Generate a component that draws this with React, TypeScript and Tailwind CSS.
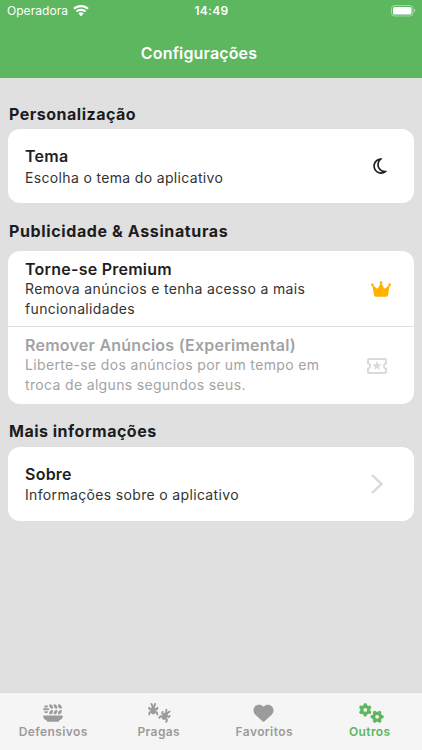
import React from 'react';
import {
  FaBugs,
  FaCrown,
  FaGears,
  FaHeart,
  FaPlateWheat,
  FaRegMoon
} from 'react-icons/fa6';
import { MdOutlineLocalActivity } from 'react-icons/md';

const StatusBar = () => (
  <div className="grid h-[22px] grid-cols-3 items-center pl-[7px] pr-1.5 text-white">
    <div className="flex items-center gap-[5px]">
      <span className="text-[12px] tracking-[0.05px]">Operadora</span>
      <svg viewBox="0 0 16 12" className="h-3 w-4" fill="currentColor">
        <path d="M8 0C5 0 2.300 1.100 0.200 3L1.700 4.600C3.300 3.100 5.500 2.200 8 2.200s4.700.9 6.300 2.400l1.500-1.600C13.700 1.100 11 0 8 0z" />
        <path d="M8 3.700C6 3.700 4.100 4.400 2.700 5.700l1.600 1.600C5.300 6.400 6.600 5.900 8 5.900s2.700.5 3.700 1.400l1.600-1.600C11.900 4.400 10 3.700 8 3.700z" />
        <path d="M8 7.300c-1.100 0-2 .4-2.700 1.100L8 11.200l2.700-2.800C10 7.700 9.100 7.300 8 7.300z" />
      </svg>
    </div>
    <span className="text-center text-[12px] font-semibold tracking-[0.3px]">14:49</span>
    <div className="flex items-center justify-end pb-px">
      <svg viewBox="0 0 25 12" className="h-3 w-[25px]">
        <rect x="0.5" y="0.5" width="21.500" height="10.500" rx="3" fill="none" stroke="white" strokeOpacity="0.45" />
        <rect x="2" y="2" width="18.500" height="7.500" rx="1.500" fill="white" />
        <path d="M23 4v3.500c.8-.3 1.200-1 1.200-1.750S23.800 4.300 23 4z" fill="white" fillOpacity="0.5" />
      </svg>
    </div>
  </div>
);

const SectionTitle = ({ children, className }: { children: React.ReactNode; className: string }) => (
  <h2 className={`px-[9px] text-[16px] leading-5 font-bold text-[#1c1c1e] ${className}`}>{children}</h2>
);

type RowProps = {
  title: string;
  description: string;
  icon: React.ReactNode;
  className: string;
  textClass?: string;
  disabled?: boolean;
};

const Row = ({ title, description, icon, className, textClass = '', disabled }: RowProps) => (
  <div className={`flex items-center justify-between pl-[17px] ${className}`}>
    <div className={`flex w-[312px] flex-col ${textClass} ${disabled ? 'text-[#a3a3a3]' : 'text-[#1f1f1f]'}`}>
      <div className="text-[16px] leading-5 font-semibold tracking-[0.24px]">{title}</div>
      <div className={`text-[14px] leading-5 tracking-[0.34px] ${disabled ? '' : 'text-[#333333]'}`}>{description}</div>
    </div>
    {icon}
  </div>
);

const tabs = [
  { label: 'Defensivos', icon: FaPlateWheat, iconClass: 'h-5 w-5' },
  { label: 'Pragas', icon: FaBugs, iconClass: 'ml-0.5 h-5 w-[23px]' },
  { label: 'Favoritos', icon: FaHeart, iconClass: 'h-5 w-[21px]' },
  { label: 'Outros', icon: FaGears, iconClass: 'ml-[5px] h-5 w-[25px]', active: true }
];

const App = () => {
  return (
    <div className="flex h-[750px] w-[422px] flex-col bg-[#e0e0e0] font-['Inter','Liberation_Sans',sans-serif]">
      <header className="h-[78px] bg-[#5cb75f]">
        <StatusBar />
        <h1 className="mt-[19px] pr-6 text-center text-[16px] leading-6 font-semibold tracking-[0.15px] text-white">
          Configurações
        </h1>
      </header>

      <main className="flex-1">
        {/* Personalização */}
        <SectionTitle className="mt-[26px] mb-[5px] tracking-[0.5px]">Personalização</SectionTitle>
        <div className="mx-2 rounded-xl bg-white">
          <Row
            title="Tema"
            description="Escolha o tema do aplicativo"
            className="h-[74px] pr-[25px]"
            textClass="gap-0.5 pt-px"
            icon={<FaRegMoon className="h-[18px] w-[18px] text-[#1f1f1f]" />}
          />
        </div>

        {/* Publicidade & Assinaturas */}
        <SectionTitle className="mt-[18px] mb-[10px] tracking-[0.62px]">Publicidade &amp; Assinaturas</SectionTitle>
        <div className="mx-2 rounded-xl bg-white">
          <Row
            title="Torne-se Premium"
            description="Remova anúncios e tenha acesso a mais funcionalidades"
            className="h-[76px] border-b border-[#e0e0e0] pr-[23px]"
            icon={<FaCrown className="h-[18px] w-5 text-[#ffb300]" />}
          />
          <Row
            title="Remover Anúncios (Experimental)"
            description="Liberte-se dos anúncios por um tempo em troca de alguns segundos seus."
            className="h-[77px] pr-[25px]"
            textClass="-mt-px"
            icon={<MdOutlineLocalActivity className="h-6 w-6 text-[#dadada]" />}
            disabled
          />
        </div>

        {/* Mais informações */}
        <SectionTitle className="mt-[17px] mb-[6px] tracking-[0.5px]">Mais informações</SectionTitle>
        <div className="mx-2 rounded-xl bg-white">
          <Row
            title="Sobre"
            description="Informações sobre o aplicativo"
            className="h-[74px] pr-[31px]"
            textClass="gap-px"
            icon={
              <svg viewBox="0 0 12 20" className="h-5 w-3" fill="none" stroke="#d8d8d8" strokeWidth="2.400">
                <path d="M1 1l9.500 9L1 19" />
              </svg>
            }
          />
        </div>
      </main>

      <nav className="grid h-[58px] grid-cols-4 border-t border-[#dadada] bg-[#f5f5f5]">
        {tabs.map((tab) => (
          <div
            key={tab.label}
            className={`flex flex-col items-center pt-2.5 ${tab.active ? 'text-[#5cb75f]' : 'text-[#9b9b9b]'}`}
          >
            <tab.icon className={tab.iconClass} />
            <span className="mt-px pl-px text-[12px] leading-4 font-semibold tracking-[0.4px]">{tab.label}</span>
          </div>
        ))}
      </nav>
    </div>
  );
};

export default App;
